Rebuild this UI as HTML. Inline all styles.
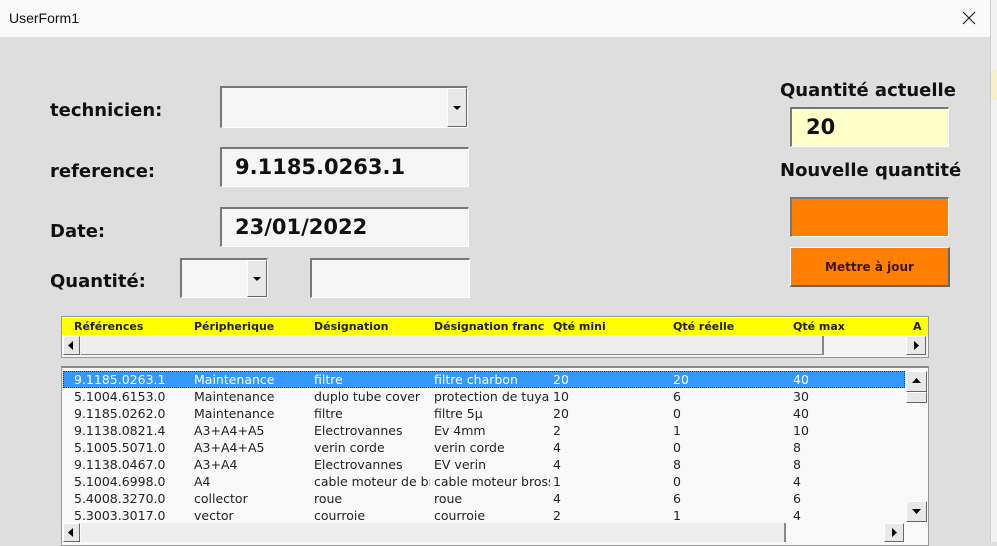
<!DOCTYPE html>
<html><head><meta charset="utf-8"><style>
*{margin:0;padding:0;box-sizing:border-box}
body{width:997px;height:542px;overflow:hidden;background:#dedede;font-family:"Liberation Sans",sans-serif;position:relative}
.a{position:absolute}
.title{left:0;top:0;width:990px;height:37px;background:#fafafa;font-size:14px;color:#111}
.lbl{font-family:"DejaVu Sans",sans-serif;font-weight:bold;font-size:18px;color:#111}
.box{background:#f6f6f6;border-top:2px solid #777;border-left:2px solid #777;border-right:1px solid #fff;border-bottom:1px solid #fff}
.val{font-family:"DejaVu Sans",sans-serif;font-weight:bold;font-size:21px;color:#111}
.btn{background:#e8e8e8;border:1px solid #fff;border-right-color:#666;border-bottom-color:#666}
.tri-d{width:0;height:0;border-left:4px solid transparent;border-right:4px solid transparent;border-top:4px solid #000}
.hdr span,.row span{position:absolute;white-space:nowrap;overflow:hidden}
.hdr{font-family:"DejaVu Sans",sans-serif;font-weight:bold;font-size:11px;color:#222}
.row{font-family:"DejaVu Sans",sans-serif;font-size:12.5px;color:#222;height:17px;line-height:17px}
</style></head><body>
<div class="a title"><span class="a" style="left:9px;top:10px">UserForm1</span>
<svg class="a" style="left:962px;top:11px" width="14" height="14"><path d="M1 1L13 13M13 1L1 13" stroke="#222" stroke-width="1.2"/></svg></div>
<div class="a" style="left:990px;top:0;width:7px;height:542px;background:#f2f2f2;border-left:1px solid #ccc"></div>
<div class="a" style="left:991px;top:70px;width:6px;height:30px;background:#f5f0c8"></div>

<div class="a lbl" style="left:50px;top:100px">technicien:</div>
<div class="a lbl" style="left:50px;top:161px">reference:</div>
<div class="a lbl" style="left:50px;top:221px">Date:</div>
<div class="a lbl" style="left:50px;top:271px">Quantité:</div>

<div class="a box" style="left:220px;top:86px;width:248px;height:42px"><div class="a btn" style="right:0;top:0;width:20px;height:39px"><div class="a tri-d" style="left:5px;top:17px"></div></div></div>
<div class="a box" style="left:220px;top:147px;width:249px;height:40px"><span class="a val" style="left:13px;top:6px">9.1185.0263.1</span></div>
<div class="a box" style="left:220px;top:207px;width:249px;height:40px"><span class="a val" style="left:13px;top:6px">23/01/2022</span></div>
<div class="a box" style="left:180px;top:258px;width:88px;height:40px"><div class="a btn" style="right:0;top:0;width:20px;height:37px"><div class="a tri-d" style="left:5px;top:16px"></div></div></div>
<div class="a box" style="left:310px;top:258px;width:160px;height:40px"></div>

<div class="a lbl" style="left:780px;top:80px">Quantité actuelle</div>
<div class="a box" style="left:790px;top:107px;width:159px;height:40px;background:#ffffc8"><span class="a val" style="left:14px;top:6px">20</span></div>
<div class="a lbl" style="left:780px;top:160px">Nouvelle quantité</div>
<div class="a box" style="left:790px;top:197px;width:159px;height:40px;background:#ff8000"></div>
<div class="a" style="left:790px;top:247px;width:160px;height:40px;background:#ff8000;border:1px solid #fff;border-right:2px solid #666;border-bottom:2px solid #666;font-family:'DejaVu Sans',sans-serif;font-weight:bold;font-size:12px;color:#3a1500;text-align:center;line-height:38px">Mettre à jour</div>

<div class="a" style="left:61px;top:316px;width:868px;height:42px;background:#f4f4f4;border:1px solid #999">
 <div class="a hdr" style="left:0;top:1px;width:866px;height:17px;background:#ffff00">
  <span style="left:12px;top:2px">Références</span><span style="left:132px;top:2px">Péripherique</span><span style="left:252px;top:2px">Désignation</span><span style="left:372px;top:2px;width:110px">Désignation francais</span><span style="left:491px;top:2px">Qté mini</span><span style="left:611px;top:2px">Qté réelle</span><span style="left:731px;top:2px">Qté max</span><span style="left:851px;top:2px">A</span></div>
 <div class="a btn" style="left:1px;top:19px;width:17px;height:19px"></div><svg class="a" style="left:6px;top:24px" width="6" height="9"><path d="M5 0L0 4.5 5 9z"/></svg>
 <div class="a" style="left:19px;top:19px;width:743px;height:19px;background:#eee;border-right:2px solid #888;border-bottom:1px solid #888"></div>
 <div class="a btn" style="left:844px;top:19px;width:20px;height:19px"></div><svg class="a" style="left:852px;top:24px" width="6" height="9"><path d="M0 0L5 4.5 0 9z"/></svg>
</div>

<div class="a" style="left:61px;top:366px;width:868px;height:180px;background:#f9f9f9;border:1px solid #999;border-top:2px solid #888">
 <div class="a" style="left:1px;top:3px;width:842px;height:17px;background:#3399ff;border:1px dotted #333"></div>
 <div class="a" style="left:12px;top:3px">
  <div class="row a" style="top:0;color:#fff;width:800px"><span style="left:0">9.1185.0263.1</span><span style="left:120px">Maintenance</span><span style="left:240px">filtre</span><span style="left:360px">filtre charbon</span><span style="left:479px">20</span><span style="left:599px">20</span><span style="left:719px">40</span></div>
  <div class="row a" style="top:17px;width:800px"><span style="left:0">5.1004.6153.0</span><span style="left:120px">Maintenance</span><span style="left:240px;width:116px">duplo tube cover</span><span style="left:360px;width:116px">protection de tuyau</span><span style="left:479px">10</span><span style="left:599px">6</span><span style="left:719px">30</span></div>
  <div class="row a" style="top:34px;width:800px"><span style="left:0">9.1185.0262.0</span><span style="left:120px">Maintenance</span><span style="left:240px">filtre</span><span style="left:360px">filtre 5µ</span><span style="left:479px">20</span><span style="left:599px">0</span><span style="left:719px">40</span></div>
  <div class="row a" style="top:51px;width:800px"><span style="left:0">9.1138.0821.4</span><span style="left:120px">A3+A4+A5</span><span style="left:240px">Electrovannes</span><span style="left:360px">Ev 4mm</span><span style="left:479px">2</span><span style="left:599px">1</span><span style="left:719px">10</span></div>
  <div class="row a" style="top:68px;width:800px"><span style="left:0">5.1005.5071.0</span><span style="left:120px">A3+A4+A5</span><span style="left:240px">verin corde</span><span style="left:360px">verin corde</span><span style="left:479px">4</span><span style="left:599px">0</span><span style="left:719px">8</span></div>
  <div class="row a" style="top:85px;width:800px"><span style="left:0">9.1138.0467.0</span><span style="left:120px">A3+A4</span><span style="left:240px">Electrovannes</span><span style="left:360px">EV verin</span><span style="left:479px">4</span><span style="left:599px">8</span><span style="left:719px">8</span></div>
  <div class="row a" style="top:102px;width:800px"><span style="left:0">5.1004.6998.0</span><span style="left:120px">A4</span><span style="left:240px;width:116px">cable moteur de brosse</span><span style="left:360px;width:116px">cable moteur brosse</span><span style="left:479px">1</span><span style="left:599px">0</span><span style="left:719px">4</span></div>
  <div class="row a" style="top:119px;width:800px"><span style="left:0">5.4008.3270.0</span><span style="left:120px">collector</span><span style="left:240px">roue</span><span style="left:360px">roue</span><span style="left:479px">4</span><span style="left:599px">6</span><span style="left:719px">6</span></div>
  <div class="row a" style="top:136px;width:800px"><span style="left:0">5.3003.3017.0</span><span style="left:120px">vector</span><span style="left:240px">courroie</span><span style="left:360px">courroie</span><span style="left:479px">2</span><span style="left:599px">1</span><span style="left:719px">4</span></div>
 </div>
 <div class="a btn" style="left:844px;top:3px;width:21px;height:21px"></div><svg class="a" style="left:850px;top:10px" width="9" height="6"><path d="M0 5L4.5 0 9 5z"/></svg>
 <div class="a btn" style="left:844px;top:24px;width:21px;height:11px"></div>
 <div class="a btn" style="left:844px;top:133px;width:21px;height:21px"></div><svg class="a" style="left:850px;top:141px" width="9" height="6"><path d="M0 0L4.5 5 9 0z"/></svg>
 <div class="a btn" style="left:1px;top:155px;width:17px;height:19px"></div><svg class="a" style="left:6px;top:160px" width="6" height="9"><path d="M5 0L0 4.5 5 9z"/></svg>
 <div class="a" style="left:19px;top:155px;width:705px;height:19px;background:#eee;border-right:2px solid #888"></div>
 <div class="a btn" style="left:822px;top:155px;width:20px;height:19px"></div><svg class="a" style="left:830px;top:160px" width="6" height="9"><path d="M0 0L5 4.5 0 9z"/></svg>
</div>
</body></html>
